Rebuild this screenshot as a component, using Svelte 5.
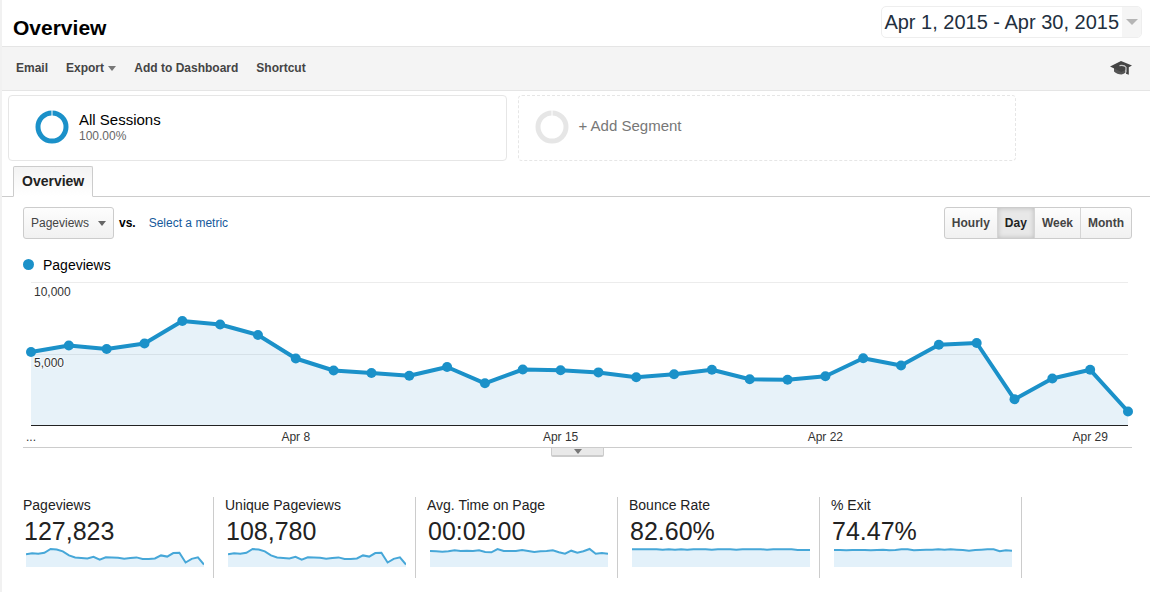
<script>
  const days = [
    5145, 5600, 5355, 5740, 7315, 7070, 6335, 4690, 3850, 3675, 3479, 4095, 2954, 3920, 3871,
    3717, 3374, 3591, 3899, 3234, 3206, 3444, 4704, 4200, 5649, 5775, 1834, 3290, 3899, 980
  ];
  const ticks = [
    { day: 0, label: '...' },
    { day: 7, label: 'Apr 8' },
    { day: 14, label: 'Apr 15' },
    { day: 21, label: 'Apr 22' },
    { day: 28, label: 'Apr 29' }
  ];
  const views = days.map((v) => v * 0.0074);
  const metrics = [
    { name: 'Pageviews', value: '127,823', levels: views },
    { name: 'Unique Pageviews', value: '108,780', levels: views },
    {
      name: 'Avg. Time on Page',
      value: '00:02:00',
      levels: [48, 47, 46, 47, 50, 48, 49, 48, 50, 45, 44, 54, 48, 48, 48, 51, 48, 45, 47, 48, 50, 44, 40, 49, 43, 47, 54, 40, 42, 40]
    },
    {
      name: 'Bounce Rate',
      value: '82.60%',
      levels: [53, 53, 53, 53, 53, 52, 53, 52, 53, 52, 53, 53, 53, 52, 53, 53, 53, 52, 53, 53, 53, 53, 52, 53, 53, 53, 53, 51, 51, 51]
    },
    {
      name: '% Exit',
      value: '74.47%',
      levels: [51, 51, 50, 51, 51, 51, 50, 51, 52, 50, 51, 53, 53, 50, 51, 52, 52, 53, 52, 53, 52, 51, 49, 51, 52, 53, 53, 47, 50, 49]
    }
  ];
  const periods = ['Hourly', 'Day', 'Week', 'Month'];

  let period = $state('Day');
  let width = $state(1108);

  const base = 143.5;
  let right = $derived(width - 4);
  let points = $derived(
    days.map((v, i) => ({ x: 7 + ((right - 7) * i) / (days.length - 1), y: base - v / 70 }))
  );
  let line = $derived(points.map((p) => `${p.x.toFixed(1)},${p.y.toFixed(1)}`).join(' '));

  const spark = (levels) =>
    levels.map((v, i) => `${((178 * i) / (levels.length - 1)).toFixed(1)},${(20 - v / 3).toFixed(1)}`).join(' ');
</script>

<div class="page">
  <header>
    <h1>Overview</h1>
    <button class="date" type="button">
      <span class="range">Apr 1, 2015 - Apr 30, 2015</span>
      <span class="drop"><i class="arrow large"></i></span>
    </button>
  </header>

  <nav class="toolbar">
    <button type="button">Email</button>
    <button type="button">Export <i class="arrow"></i></button>
    <button type="button">Add to Dashboard</button>
    <button type="button">Shortcut</button>
    <button type="button" class="learn" aria-label="Education">
      <svg width="22" height="16" viewBox="0 0 22 16">
        <path d="M4 8V11.500Q7 14.500 11.500 14.500Q14 14 15.500 12.500V8Z" fill="#555" />
        <path d="M0 6.500L11 1L22 5.500L18.800 7.200V14.800L16 13.800V9.500L11.500 12Z" fill="#444" />
        <path d="M9.500 5.600Q14.500 4.800 16 7.200V12.500" fill="none" stroke="#c9c9c9" stroke-width="1.200" />
      </svg>
    </button>
  </nav>

  <section class="segments">
    <button type="button" class="segment">
      <svg width="34" height="34" viewBox="0 0 34 34">
        <circle cx="17" cy="17" r="14" fill="none" stroke="#1b91c9" stroke-width="5" />
        <path d="M17 0V6" stroke="#fff" stroke-width="1" />
      </svg>
      <span class="about"><span class="name">All Sessions</span><span class="share">100.00%</span></span>
    </button>
    <button type="button" class="segment add">
      <svg width="34" height="34" viewBox="0 0 34 34">
        <circle cx="17" cy="17" r="14" fill="none" stroke="#e6e6e6" stroke-width="5" />
        <path d="M17 0V6" stroke="#fff" stroke-width="1" />
      </svg>
      <span class="name">+ Add Segment</span>
    </button>
  </section>

  <div class="tabs" role="tablist">
    <button type="button" role="tab" aria-selected="true">Overview</button>
  </div>

  <main>
    <div class="controls">
      <div class="picker">
        <select aria-label="Metric"><option>Pageviews</option></select>
        <i class="arrow"></i>
      </div>
      <span class="vs">vs.</span>
      <a href="#metric">Select a metric</a>
      <div class="periods">
        {#each periods as p}
          <button type="button" class:active={p === period} onclick={() => (period = p)}>{p}</button>
        {/each}
      </div>
    </div>

    <div class="legend"><i></i>Pageviews</div>

    <div class="chart" bind:clientWidth={width}>
      <svg {width} height="165">
        <path d="M7 0.500H{right}M7 72.500H{right}" stroke="#ececec" />
        <polygon points="7,{base} {line} {right},{base}" fill="#1b88c9" fill-opacity="0.105" />
        <path d="M7 143.500H{right}" stroke="#222" />
        <polyline points={line} fill="none" stroke="#1b91c9" stroke-width="4" stroke-linejoin="round" />
        {#each points as p}
          <circle cx={p.x} cy={p.y} r="5" fill="#1b91c9" />
        {/each}
        <text x="10" y="14">10,000</text>
        <text x="10" y="85">5,000</text>
        {#each ticks as t}
          <text x={points[t.day].x} y="159" text-anchor="middle">{t.label}</text>
        {/each}
      </svg>
    </div>
    <div class="divider">
      <button type="button" aria-label="Expand"><i class="arrow"></i></button>
    </div>
  </main>

  <section class="metrics">
    {#each metrics as m}
      <div class="metric">
        <span class="label">{m.name}</span>
        <span class="value">{m.value}</span>
        <svg viewBox="0 0 178 20" height="20" preserveAspectRatio="none">
          <polygon points="0,20 {spark(m.levels)} 178,20" fill="#e3f1fa" />
          <polyline points={spark(m.levels)} fill="none" stroke="#46a7d8" stroke-width="2" vector-effect="non-scaling-stroke" />
        </svg>
      </div>
    {/each}
  </section>
</div>

<style>
  :global(body) {
    margin: 0;
    background: #fff;
  }
  .page {
    box-sizing: border-box;
    min-height: 100vh;
    border-left: 2px solid #f1f1f1;
    font-family: 'Liberation Sans', Arial, sans-serif;
    font-size: 12px;
    color: #222;
  }
  button,
  select {
    font: inherit;
    color: inherit;
    margin: 0;
    padding: 0;
    border: 0;
    background: none;
    cursor: pointer;
  }
  svg {
    display: block;
  }
  .arrow {
    display: inline-block;
    border: 4px solid transparent;
    border-top: 5px solid #777;
    border-bottom: 0;
  }
  .arrow.large {
    border-width: 6px;
    border-top-color: #b5b5b5;
    border-bottom: 0;
  }
  header {
    display: flex;
    align-items: center;
    justify-content: space-between;
    box-sizing: border-box;
    height: 47px;
    padding: 0 8px 0 11px;
    border-bottom: 1px solid #e5e5e5;
  }
  h1 {
    margin: 10px 0 0;
    font-size: 21px;
    line-height: 24px;
    color: #000;
  }
  .date {
    display: flex;
    height: 32px;
    margin-bottom: 2px;
    border: 1px solid #eee;
    border-radius: 5px;
    overflow: hidden;
    font-size: 20px;
    line-height: 30px;
    color: #222f3e;
  }
  .range {
    padding: 0 3px 0 2px;
  }
  .drop {
    display: flex;
    align-items: center;
    justify-content: center;
    width: 19px;
    background: #f5f5f5;
  }
  .toolbar {
    display: flex;
    align-items: center;
    gap: 18px;
    box-sizing: border-box;
    height: 44px;
    padding: 0 18px 2px 14px;
    border-bottom: 1px solid #e5e5e5;
    background: #f4f4f4;
    font-weight: bold;
    color: #444;
  }
  .toolbar .arrow {
    margin-left: 1px;
    vertical-align: 1px;
  }
  .learn {
    margin-left: auto;
  }
  .segments {
    display: grid;
    grid-template-columns: 1fr 1fr;
    gap: 11px;
    padding: 4px 134px 0 6px;
  }
  .segment {
    display: flex;
    align-items: center;
    gap: 10px;
    height: 66px;
    padding: 0 26px 2px;
    border: 1px solid #e6e6e6;
    border-radius: 4px;
    text-align: left;
    line-height: 17px;
  }
  .add {
    padding: 0 16px 2px;
    border-style: dashed;
  }
  .about {
    display: flex;
    flex-direction: column;
    padding-top: 2px;
  }
  .name {
    font-size: 15px;
    color: #000;
  }
  .add .name {
    padding-bottom: 4px;
    color: #777;
  }
  .share {
    color: #666;
  }
  .tabs {
    display: flex;
    margin-top: 5px;
    padding-left: 11px;
    border-bottom: 1px solid #ccc;
  }
  .tabs button {
    height: 31px;
    margin-bottom: -1px;
    padding: 0 8px 2px;
    border: 1px solid #ccc;
    border-bottom-color: #fff;
    border-radius: 2px 2px 0 0;
    background: linear-gradient(#f3f3f3, #fff);
    font-size: 14px;
    font-weight: bold;
  }
  main {
    padding: 10px 18px 0 21px;
  }
  .controls {
    display: flex;
    align-items: center;
  }
  .picker {
    display: grid;
    align-items: center;
    width: 91px;
  }
  .picker > * {
    grid-area: 1 / 1;
  }
  .picker .arrow {
    justify-self: end;
    margin-right: 8px;
    border-top-color: #666;
    pointer-events: none;
  }
  select {
    appearance: none;
    box-sizing: border-box;
    height: 32px;
    padding: 0 7px;
    border: 1px solid #ccc;
    border-radius: 3px;
    background: linear-gradient(#fdfdfd, #f1f1f1);
    color: #444;
  }
  .vs {
    margin: 0 13px 0 5px;
    font-weight: bold;
    color: #000;
  }
  a {
    color: #15599b;
    text-decoration: none;
  }
  .periods {
    display: flex;
    box-sizing: border-box;
    height: 32px;
    margin-left: auto;
    border: 1px solid #ccc;
    border-radius: 3px;
    background: linear-gradient(#fdfdfd, #f1f1f1);
    font-weight: bold;
    color: #444;
  }
  .periods button {
    padding: 0 7px;
  }
  .periods button + button {
    border-left: 1px solid #d5d5d5;
  }
  .periods button.active {
    background: #e8e8e8;
    box-shadow: inset 0 0 5px #bbb;
    color: #222;
  }
  .legend {
    display: flex;
    align-items: center;
    gap: 9px;
    box-sizing: border-box;
    height: 43px;
    padding-top: 8px;
    font-size: 14px;
    line-height: 16px;
    color: #000;
  }
  .legend i {
    width: 11px;
    height: 11px;
    border-radius: 50%;
    background: #1b91c9;
  }
  .chart {
    height: 165px;
    margin-left: 1px;
  }
  .chart svg {
    overflow: visible;
  }
  .chart text {
    fill: #333;
    stroke: #fff;
    stroke-width: 2px;
    stroke-opacity: 0.6;
    paint-order: stroke;
  }
  .divider {
    display: flex;
    justify-content: center;
    height: 10px;
    border-top: 1px solid #ccc;
  }
  .divider button {
    display: flex;
    align-items: center;
    justify-content: center;
    box-sizing: border-box;
    width: 53px;
    height: 9px;
    border: 1px solid #ccc;
    border-top: 0;
    border-bottom-width: 2px;
    border-radius: 0 0 2px 2px;
    background: #e9e9e9;
  }
  .metrics {
    display: grid;
    grid-template-columns: repeat(5, 1fr);
    margin: 39px 128px 0 10px;
  }
  .metric {
    display: flex;
    flex-direction: column;
    box-sizing: border-box;
    height: 81px;
    padding: 0 9px 0 11px;
    border-right: 1px solid #ccc;
  }
  .label {
    line-height: 16px;
    font-size: 14px;
  }
  .value {
    padding-top: 3px;
    padding-left: 1px;
    font-size: 25px;
    line-height: 31px;
  }
  .metric svg {
    width: calc(100% - 3px);
    margin-left: 3px;
  }
</style>
